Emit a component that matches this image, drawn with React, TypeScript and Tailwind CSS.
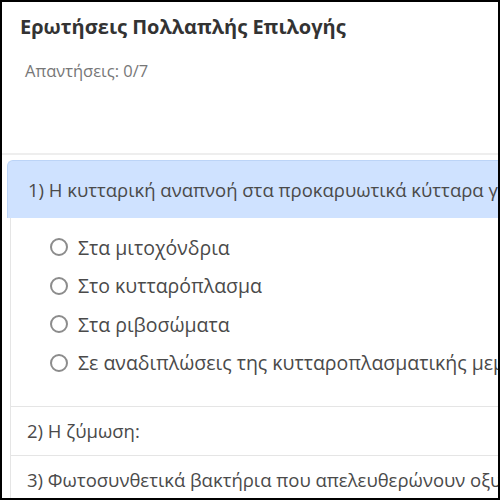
import React from "react";

const OPTIONS = [
  "Στα μιτοχόνδρια",
  "Στο κυτταρόπλασμα",
  "Στα ριβοσώματα",
  "Σε αναδιπλώσεις της κυτταροπλασματικής μεμβράνης",
];

export default function App() {
  return (
    <div className="w-[500px] h-[500px] border-2 border-black overflow-hidden bg-white font-['Open_Sans',sans-serif] text-[#4a4a4a]">
      {/* κεφαλίδα */}
      <div className="h-[151px] pl-[18px] pt-[11px]">
        <h1 className="text-[20px] leading-[28px] font-bold text-[#333] whitespace-nowrap">
          Ερωτήσεις Πολλαπλής Επιλογής
        </h1>
        <p className="mt-[20px] pl-[5px] text-[16.5px] leading-[20px] text-[#777]">Απαντήσεις: 0/7</p>
      </div>
      <div className="border-t-2 border-[#eeeeee]" />

      {/* ερωτήσεις */}
      <div className="pl-[5px] pt-[5px]">
        <div className="w-[620px]">
          <div className="h-[58px] bg-[#cfe2ff] rounded-tl-[6px] border-l border-t border-[#bcd4f7] pl-[20px] flex items-center text-[18.5px] whitespace-nowrap">
            1) Η κυτταρική αναπνοή στα προκαρυωτικά κύτταρα γίνεται:
          </div>
          <div className="ml-[3px] border-l border-[#e5e5e5]">
            <div className="pt-[10px] pb-[24px] pl-[39px]">
              {OPTIONS.map((o) => (
                <label key={o} className="h-[38.5px] flex items-center gap-[10px] whitespace-nowrap text-[19.5px]">
                  <span className="w-[18px] h-[18px] rounded-full border-2 border-[#8c8c8c] shrink-0" />
                  {o}
                </label>
              ))}
            </div>
            <div className="border-t border-[#e5e5e5] h-[49px] pl-[16px] flex items-center text-[18.5px] whitespace-nowrap">
              2) Η ζύμωση:
            </div>
            <div className="border-t border-[#e5e5e5] h-[49px] pl-[16px] flex items-center text-[18.5px] whitespace-nowrap">
              3) Φωτοσυνθετικά βακτήρια που απελευθερώνουν οξυγόνο είναι:
            </div>
          </div>
        </div>
      </div>
    </div>
  );
}
